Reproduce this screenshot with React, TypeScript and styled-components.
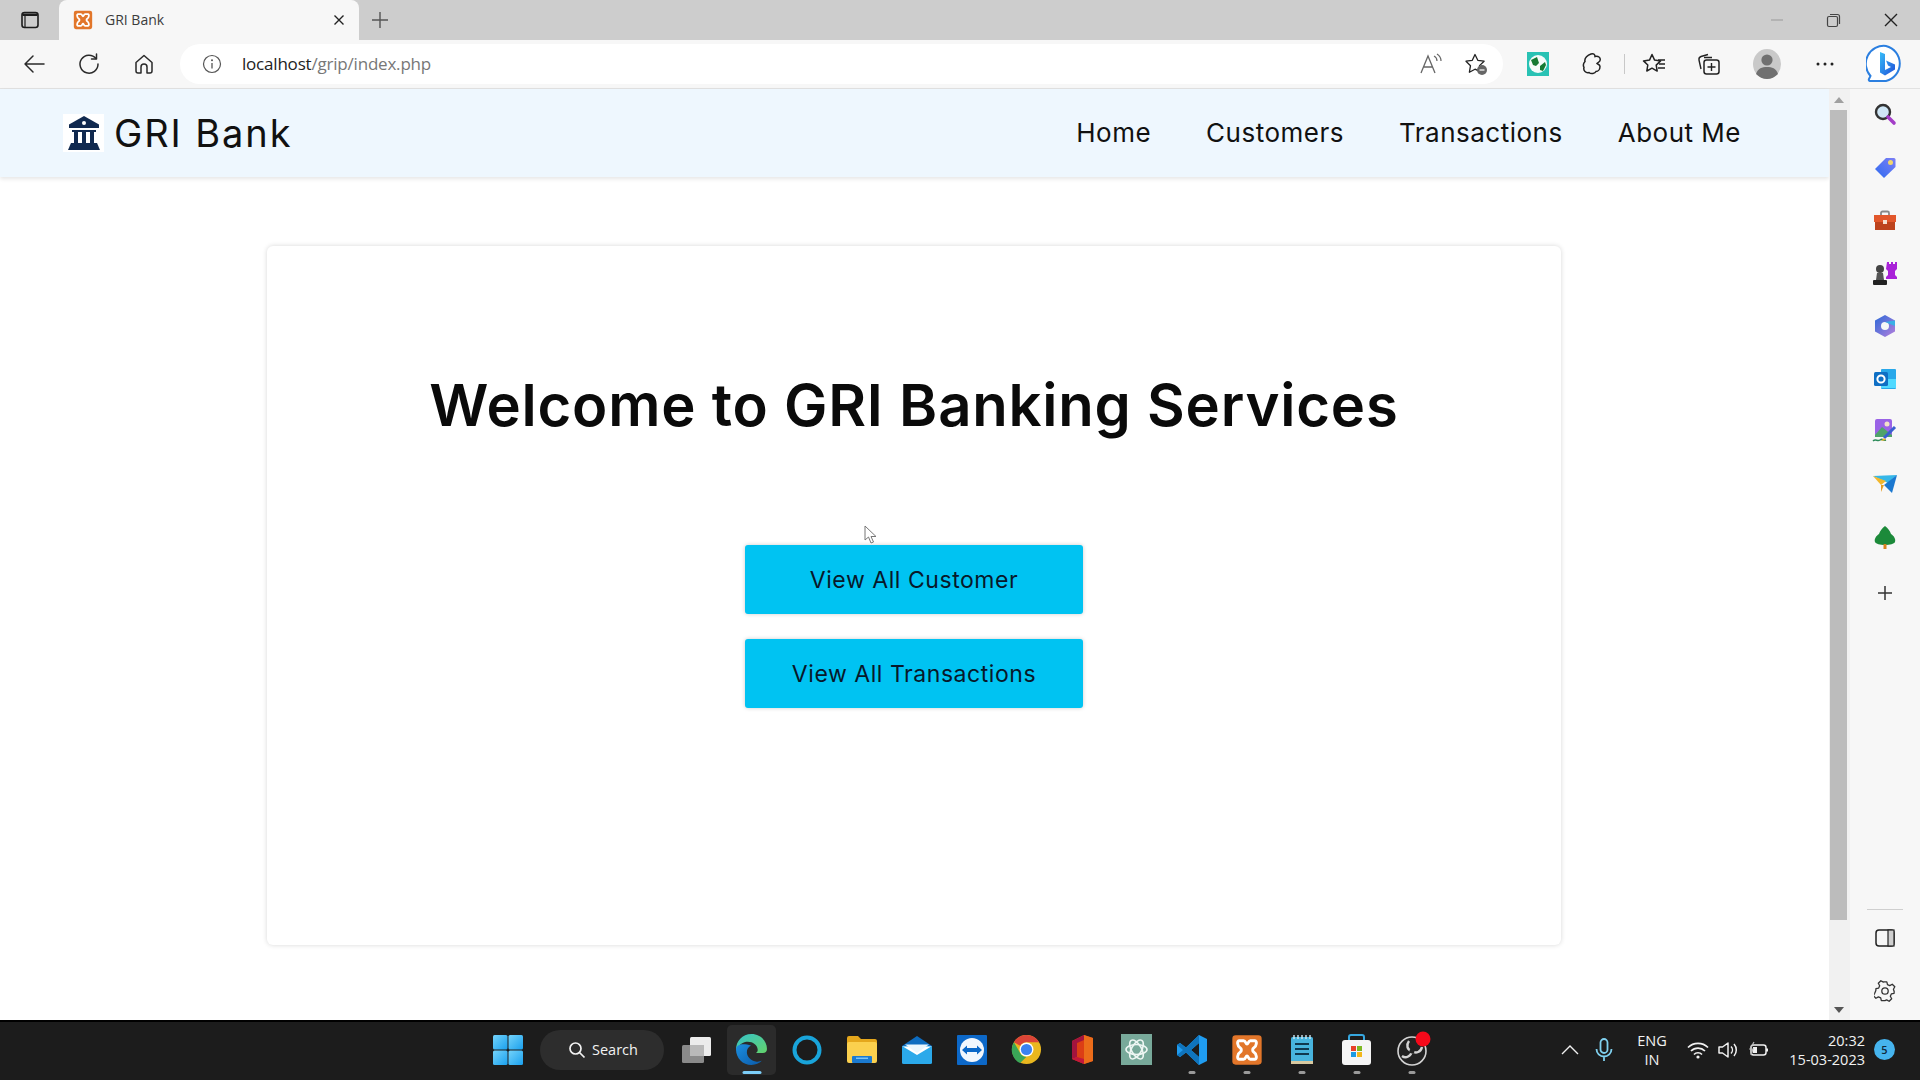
import React from "react";
import styled, { createGlobalStyle } from "styled-components";

const Global = createGlobalStyle`
  html, body { margin: 0; padding: 0; height: 100%; overflow: hidden; background: #fff; }
  #root { height: 100%; }
  * { box-sizing: border-box; }
`;

const Screen = styled.div`
  position: relative;
  width: 1920px;
  height: 1080px;
  display: flex;
  flex-direction: column;
  font-family: "Inter", "Liberation Sans", sans-serif;
  color: #0b0b0b;
  overflow: hidden;
`;

/* ---------- browser chrome ---------- */
const TabStrip = styled.div`
  height: 40px;
  flex: none;
  background: #cdcdcd;
  display: flex;
  align-items: flex-end;
`;
const TabActions = styled.div`
  width: 59px;
  height: 40px;
  display: flex;
  align-items: center;
  padding-left: 20px;
`;
const Tab = styled.div`
  width: 300px;
  height: 40px;
  background: #f7f7f7;
  border-radius: 8px 8px 0 0;
  display: flex;
  align-items: center;
  padding: 0 13px 0 14px;
  gap: 12px;
`;
const TabTitle = styled.span`
  flex: 1;
  font: 14px "Open Sans", sans-serif;
  color: #3c3c3c;
  margin-top: -1px;
`;
const NewTab = styled.div`
  width: 42px;
  height: 40px;
  display: flex;
  align-items: center;
  justify-content: center;
  margin-top: -1px;
`;
const WindowControls = styled.div`
  margin-left: auto;
  height: 40px;
  display: flex;
  align-items: center;
  padding-right: 1px;
`;
const WinBtn = styled.div`
  width: 57px;
  display: flex;
  justify-content: center;
`;
const Toolbar = styled.div`
  height: 49px;
  flex: none;
  background: #f7f7f7;
  border-bottom: 1px solid #e2e2e2;
  display: flex;
  align-items: center;
  padding-left: 6px;
`;
const ToolBtn = styled.div<{ $w?: number }>`
  width: ${(p) => p.$w ?? 55}px;
  height: 40px;
  flex: none;
  display: flex;
  align-items: center;
  justify-content: center;
`;
const AddressBar = styled.div`
  width: 1323px;
  height: 40px;
  margin: 0 7px 0 9px;
  background: #fff;
  border-radius: 20px;
  display: flex;
  align-items: center;
  padding: 0 5px 0 22px;
  flex: none;
`;
const Url = styled.span`
  flex: 1;
  margin: -2px 0 0 20px;
  font: 17px "Open Sans", sans-serif;
  letter-spacing: -0.2px;
  color: #777;
`;
const UrlHost = styled.span`
  color: #222;
`;
const ToolDivider = styled.div`
  width: 1px;
  height: 20px;
  background: #c8c8c8;
  flex: none;
  margin: 0 1px 0 4px;
`;

/* ---------- viewport ---------- */
const Viewport = styled.div`
  flex: 1;
  min-height: 0;
  display: flex;
`;
const Page = styled.div`
  flex: 1;
  min-width: 0;
  background: #fff;
  display: flex;
  flex-direction: column;
`;
const NavBar = styled.nav`
  height: 88px;
  flex: none;
  background: #eef7fe;
  box-shadow: 0 2px 4px rgba(0, 0, 0, 0.1);
  display: flex;
  align-items: center;
  padding: 0 88px 0 63px;
`;
const Brand = styled.div`
  display: flex;
  align-items: center;
  gap: 10px;
  font-size: 38px;
  line-height: 46px;
  letter-spacing: 1.9px;
  font-weight: 400;
  color: #111;
  margin-top: -1px;
`;
const BrandMark = styled.div`
  width: 41px;
  height: 38px;
  background: #fff;
  display: flex;
  align-items: center;
  justify-content: center;
`;
const NavLinks = styled.div`
  margin: -2px 0 0 auto;
  display: flex;
  gap: 55px;
`;
const NavLink = styled.a`
  font-size: 26px;
  letter-spacing: 0.5px;
  color: #111;
`;
const Content = styled.main`
  flex: 1;
  padding: 69px 0 0 267px;
`;
const Card = styled.section`
  width: 1294px;
  height: 699px;
  background: #fff;
  border-radius: 6px;
  box-shadow: 0 0 5px rgba(0, 0, 0, 0.16);
  display: flex;
  flex-direction: column;
  align-items: center;
  padding-top: 121px;
`;
const Heading = styled.h1`
  margin: 0;
  font-size: 58px;
  line-height: 76px;
  font-weight: 600;
  letter-spacing: 0.8px;
  color: #0a0a0a;
`;
const ButtonStack = styled.div`
  margin-top: 102px;
  display: flex;
  flex-direction: column;
  gap: 25px;
`;
const ActionButton = styled.button`
  width: 338px;
  height: 69px;
  border: 0;
  border-radius: 3px;
  background: #00c3f2;
  box-shadow: 0 0 4px rgba(0, 0, 0, 0.2);
  font-family: inherit;
  font-size: 23px;
  letter-spacing: 0.55px;
  color: #08182a;
`;
const Cursor = styled.svg`
  position: absolute;
  left: 864px;
  top: 525px;
`;
const ScrollTrack = styled.div`
  width: 21px;
  flex: none;
  background: #f1f1f1;
  display: flex;
  flex-direction: column;
  align-items: center;
  padding-right: 2px;
`;
const ArrowBox = styled.div`
  height: 21px;
  display: flex;
  align-items: center;
  justify-content: center;
  flex: none;
`;
const ScrollThumb = styled.div`
  width: 17px;
  height: 810px;
  background: #bcbcbc;
  flex: none;
`;
const Spring = styled.div`
  flex: 1;
`;
const SideBar = styled.aside`
  width: 70px;
  flex: none;
  background: #f7f7f7;
  display: flex;
  flex-direction: column;
  align-items: center;
  padding-bottom: 3px;
`;
const SideBtn = styled.div<{ $top?: number }>`
  height: 52.7px;
  width: 100%;
  flex: none;
  margin-top: ${(p) => p.$top ?? 0}px;
  display: flex;
  align-items: center;
  justify-content: center;
`;
const SideDivider = styled.div`
  width: 36px;
  height: 1px;
  background: #cfcfcf;
  margin-bottom: 2px;
`;

/* ---------- task bar ---------- */
const TaskBar = styled.footer`
  height: 60px;
  flex: none;
  background: #1c1c1c;
  border-top: 2px solid #000;
  display: flex;
  align-items: center;
  padding: 0 0 3px 480px;
  position: relative;
`;
const TaskCell = styled.div<{ $active?: boolean; $gap?: number }>`
  position: relative;
  width: 55px;
  height: 50px;
  flex: none;
  margin-left: ${(p) => p.$gap ?? 0}px;
  display: flex;
  align-items: center;
  justify-content: center;
  &::before {
    content: "";
    position: absolute;
    left: 3px;
    right: 3px;
    top: 0;
    bottom: 0;
    border-radius: 5px;
    background: ${(p) => (p.$active ? "#2b2b2b" : "transparent")};
  }
  & > svg {
    position: relative;
  }
`;
const RunDot = styled.span<{ $active?: boolean }>`
  position: absolute;
  left: 50%;
  transform: translateX(-50%);
  bottom: 1px;
  width: ${(p) => (p.$active ? 19 : 7)}px;
  height: 3px;
  border-radius: 2px;
  background: ${(p) => (p.$active ? "#7ccdf7" : "#9a9a9a")};
`;
const SearchPill = styled.div`
  width: 124px;
  height: 40px;
  margin-left: 5px;
  border-radius: 20px;
  background: #2d2d2d;
  display: flex;
  align-items: center;
  justify-content: center;
  gap: 6px;
  flex: none;
  font: 14.5px "Open Sans", sans-serif;
  color: #f2f2f2;
  padding-left: 2px;
`;
const Tray = styled.div`
  margin-left: auto;
  display: flex;
  align-items: center;
  height: 100%;
  padding-right: 25px;
`;
const TrayIcon = styled.div<{ $w: number }>`
  width: ${(p) => p.$w}px;
  display: flex;
  justify-content: center;
  flex: none;
`;
const TrayText = styled.div<{ $align: string; $w: number }>`
  width: ${(p) => p.$w}px;
  flex: none;
  font: 14.5px/19px "Open Sans", sans-serif;
  color: #f2f2f2;
  text-align: ${(p) => p.$align};
`;
const Badge = styled.div`
  width: 21px;
  height: 21px;
  margin-left: 9px;
  border-radius: 50%;
  background: #46b4ee;
  color: #10283a;
  font: 600 11px/21px "Open Sans", sans-serif;
  text-align: center;
  flex: none;
`;

/* ---------- drawings ---------- */
type IP = { s?: number };
const line = { fill: "none", stroke: "#2a2a2a", strokeWidth: 1.5, strokeLinecap: "round" as const, strokeLinejoin: "round" as const };

const Xampp = ({ s = 20 }: IP) => (
  <svg width={s} height={s} viewBox="0 0 24 24">
    <rect x="1" y="1" width="22" height="22" rx="2.5" fill="#e2762a" />
    <path d="M6 5h3.500c1.500 0 1.500 2.500 2.500 2.500S13 5 14.500 5H18c1.500 0 1.500 4-1 5.500-1 .6-1 2.400 0 3 2.500 1.500 2.500 5.500 1 5.500h-3.500c-1.500 0-1.500-2.500-2.500-2.500S11 19 9.500 19H6c-1.500 0-1.500-4 1-5.500 1-.6 1-2.400 0-3C4.500 9 4.500 5 6 5z" fill="none" stroke="#fff" strokeWidth="2.200" />
  </svg>
);
const BankMark = () => (
  <svg width="34" height="36" viewBox="0 0 34 36">
    <path d="M17 1 L32 9.500 V13 H2 V9.500 Z" fill="#10294f" />
    <circle cx="17" cy="8" r="2" fill="#fff" />
    <rect x="5" y="15" width="24" height="2" fill="#10294f" />
    <rect x="7" y="17" width="4" height="11" fill="#10294f" />
    <rect x="15" y="17" width="4" height="11" fill="#10294f" />
    <rect x="23" y="17" width="4" height="11" fill="#10294f" />
    <path d="M4 28 H30 L33 35 H1 Z" fill="#10294f" />
  </svg>
);
const Edge = () => (
  <svg width="33" height="33" viewBox="0 0 32 32">
    <defs>
      <linearGradient id="eg1" x1="0" y1="0" x2="1" y2="1"><stop offset="0" stopColor="#36c2c9" /><stop offset="1" stopColor="#63d36a" /></linearGradient>
      <linearGradient id="eg2" x1="0" y1="0" x2="1" y2="1"><stop offset="0" stopColor="#1c8fe0" /><stop offset="1" stopColor="#0b5aa8" /></linearGradient>
    </defs>
    <path d="M16 1C7 1 1 8 1 16c0 .5 0 1 .1 1.500C3 11 8 8.500 12.500 8.500c5 0 9 3 9.500 7.500.2 2-1 3.500-3 3.500h8c2.500 0 4-1.500 4-4C31 7.500 24.500 1 16 1z" fill="url(#eg1)" />
    <path d="M1 16c0 8.500 6.500 15 15 15 4 0 7.500-1.500 10-4-2 .8-4 1-6 .6-5-1-8.500-5-8.500-9 0-3 1.500-5 4-6.500C9 10 1 10 1 16z" fill="url(#eg2)" />
  </svg>
);
const Chrome = () => (
  <svg width="31" height="31" viewBox="0 0 32 32">
    <circle cx="16" cy="16" r="15" fill="#e9b71f" />
    <path d="M16 1a15 15 0 0 1 13 7.500H16a7.500 7.500 0 0 0-6.500 3.750L3 8.500A15 15 0 0 1 16 1z" fill="#db4437" />
    <path d="M3 8.500l6.500 11.250a7.500 7.500 0 0 0 6.500 3.750L9.500 30A15 15 0 0 1 3 8.500z" fill="#3aa757" />
    <circle cx="16" cy="16" r="7.200" fill="#fff" />
    <circle cx="16" cy="16" r="5.800" fill="#3b82f0" />
  </svg>
);
const Teamviewer = () => (
  <svg width="30" height="30" viewBox="0 0 30 30">
    <rect width="30" height="30" rx="1" fill="#0c68c8" />
    <circle cx="15" cy="15" r="12" fill="#f2f7fd" />
    <path d="M5 15l5-4.500V13h10v-2.500l5 4.500-5 4.500V17H10v2.500z" fill="#0c68c8" />
  </svg>
);
const ChatGpt = () => (
  <svg width="31" height="31" viewBox="0 0 31 31">
    <rect width="31" height="31" fill="#78a99a" />
    <g fill="none" stroke="#eef6f3" strokeWidth="1.600">
      <ellipse cx="15.500" cy="15.500" rx="10.500" ry="5" />
      <ellipse cx="15.500" cy="15.500" rx="10.500" ry="5" transform="rotate(60 15.500 15.500)" />
      <ellipse cx="15.500" cy="15.500" rx="10.500" ry="5" transform="rotate(120 15.500 15.500)" />
    </g>
  </svg>
);

const taskApps: { key: string; node: React.ReactNode; dot?: boolean; active?: boolean }[] = [
  { key: "tv", node: (
    <svg width="31" height="28" viewBox="0 0 31 28">
      <rect x="1" y="9" width="22" height="18" rx="1.500" fill="#8a8a8a" />
      <rect x="9" y="1" width="21" height="19" rx="1.500" fill="#ececec" />
      <rect x="9" y="9" width="14" height="11" fill="#b9b9b9" />
    </svg>
  ) },
  { key: "edge", node: <Edge />, active: true },
  { key: "cortana", node: (
    <svg width="30" height="30" viewBox="0 0 30 30"><circle cx="15" cy="15" r="12.500" fill="none" stroke="#19a4da" strokeWidth="4" /></svg>
  ) },
  { key: "files", node: (
    <svg width="32" height="29" viewBox="0 0 32 29">
      <path d="M1 3a2 2 0 0 1 2-2h9l3 3h14a2 2 0 0 1 2 2v4H1z" fill="#e5a71c" />
      <rect x="1" y="7" width="30" height="21" rx="2" fill="#fbd04e" />
      <rect x="6" y="21" width="20" height="7" rx="1" fill="#1b7ad0" />
      <rect x="10" y="22.500" width="12" height="1.500" fill="#7cc4f5" />
    </svg>
  ) },
  { key: "mail", node: (
    <svg width="32" height="30" viewBox="0 0 32 30">
      <path d="M1 11 L16 1 L31 11 V14 H1z" fill="#0d6cc0" />
      <rect x="1" y="11" width="30" height="18" rx="1.500" fill="#2ba9ea" />
      <path d="M1 11 L16 20 L31 11 V11.500 H1z" fill="#fff" />
      <path d="M4 9.500h24L16 18z" fill="#eaf6fd" />
    </svg>
  ) },
  { key: "team", node: <Teamviewer /> },
  { key: "chrome", node: <Chrome /> },
  { key: "office", node: (
    <svg width="24" height="31" viewBox="0 0 24 31">
      <path d="M14 1 L23 4 V27 L14 30 L2 25 V7z" fill="#dc3e15" />
      <path d="M14 1 L2 7 V25 L7 23 V9 L14 6z" fill="#a3143e" />
      <path d="M14 1 L23 4 V27 L14 30z" fill="#eb6c1a" />
      <path d="M2 25 L14 30 V25 L7 23z" fill="#c3173c" />
    </svg>
  ) },
  { key: "gpt", node: <ChatGpt /> },
  { key: "code", dot: true, node: (
    <svg width="32" height="32" viewBox="0 0 32 32">
      <path d="M23 1 L31 5 V27 L23 31 L10 18.500 L4 23 L1 21 V11 L4 9 L10 13.500z M23 9 L15 16 L23 23z" fillRule="evenodd" fill="#1f9cf0" />
      <path d="M23 1 L10 13.500 L4 9 L1 11 L7 16 L1 21 L4 23 L10 18.500 L23 31z M23 9 L15 16 L23 23z" fillRule="evenodd" fill="#0f74bd" />
    </svg>
  ) },
  { key: "xampp", dot: true, node: <Xampp s={32} /> },
  { key: "notes", dot: true, node: (
    <svg width="24" height="31" viewBox="0 0 24 31">
      <rect x="1" y="3" width="22" height="27" rx="1.500" fill="#48b4de" />
      <rect x="1" y="27" width="22" height="3" fill="#d8c9a0" />
      <path d="M4 1v4M8 1v4M12 1v4M16 1v4M20 1v4" stroke="#cfe8f4" strokeWidth="1.400" />
      <path d="M5 10h14M5 15h14M5 20h14" stroke="#10384f" strokeWidth="2" />
    </svg>
  ) },
  { key: "store", dot: true, node: (
    <svg width="31" height="32" viewBox="0 0 31 32">
      <path d="M8 7V3a2 2 0 0 1 2-2h11a2 2 0 0 1 2 2v4" fill="none" stroke="#36a7df" strokeWidth="2" />
      <rect x="1" y="6" width="29" height="25" rx="3" fill="#f5f5f5" />
      <rect x="10" y="12" width="5" height="5" fill="#e8412a" />
      <rect x="16" y="12" width="5" height="5" fill="#7db824" />
      <rect x="10" y="18" width="5" height="5" fill="#1d9ae2" />
      <rect x="16" y="18" width="5" height="5" fill="#f3b71b" />
    </svg>
  ) },
  { key: "obs", dot: true, node: (
    <svg width="40" height="40" viewBox="0 0 40 40">
      <circle cx="20" cy="21" r="14" fill="#222" stroke="#d4d4d4" strokeWidth="1.600" />
      <path d="M20 21c-5-1-6-6-3-10M20 21c4 3 9 1 10-4M20 21c-1 5-6 8-10 5" fill="none" stroke="#d4d4d4" strokeWidth="2.400" />
      <circle cx="20" cy="21" r="2.500" fill="#222" />
      <circle cx="31" cy="9" r="7.500" fill="#f5091a" />
    </svg>
  ) },
];

const sideIcons: React.ReactNode[] = [
  <svg key="a" width="24" height="24" viewBox="0 0 24 24">
    <circle cx="10" cy="9" r="7" fill="#cfe6f6" stroke="#333" strokeWidth="2.400" />
    <path d="M15 14 L21 20" stroke="#a33dc7" strokeWidth="3.600" strokeLinecap="round" />
  </svg>,
  <svg key="b" width="24" height="24" viewBox="0 0 24 24">
    <defs><linearGradient id="tag" x1="0" y1="1" x2="1" y2="0"><stop offset="0" stopColor="#2d6bf0" /><stop offset="1" stopColor="#7d7ff5" /></linearGradient></defs>
    <path d="M13 2 H21 a1.500 1.500 0 0 1 1.500 1.500 V11 L11 22 L2 13z" fill="url(#tag)" />
    <circle cx="17.500" cy="6.500" r="2.500" fill="#f2d66c" />
  </svg>,
  <svg key="c" width="24" height="22" viewBox="0 0 24 22">
    <path d="M8 6V3a1.500 1.500 0 0 1 1.500-1.500h5A1.500 1.500 0 0 1 16 3v3" fill="none" stroke="#888" strokeWidth="1.800" />
    <rect x="1" y="5" width="22" height="7" fill="#e2572b" />
    <rect x="2" y="12" width="20" height="8" fill="#bd431d" />
    <rect x="10" y="10" width="4" height="4" fill="#f5e0d0" />
  </svg>,
  <svg key="d" width="26" height="26" viewBox="0 0 26 26">
    <path d="M15 2h2v2h2V2h2v2h2V2h2v7l-2 2v4l2 2v2H14v-2l2-2v-4l-2-2z" fill="#a922d8" />
    <circle cx="8" cy="9" r="4" fill="#444" />
    <path d="M5 13h6l1 7H4z" fill="#555" />
    <rect x="1" y="20" width="14" height="5" rx="1" fill="#222" />
  </svg>,
  <svg key="e" width="24" height="24" viewBox="0 0 24 24">
    <defs><linearGradient id="m3" x1="0" y1="0" x2="1" y2="1"><stop offset="0" stopColor="#2b6ad8" /><stop offset="1" stopColor="#b57fdc" /></linearGradient></defs>
    <path d="M12 1 L22 6.500 V17.500 L12 23 L2 17.500 V6.500z" fill="url(#m3)" />
    <circle cx="12" cy="12" r="4" fill="#f7f7f7" />
    <path d="M12 8 L22 6.500 V12z" fill="#3ab0e6" />
  </svg>,
  <svg key="f" width="24" height="24" viewBox="0 0 24 24">
    <rect x="8" y="2" width="15" height="20" rx="1" fill="#28a8ea" />
    <path d="M8 12 L23 12 V21 H8z" fill="#50d9ff" />
    <rect x="1" y="5" width="14" height="14" rx="1.500" fill="#0f6fc4" />
    <circle cx="8" cy="12" r="3.600" fill="none" stroke="#fff" strokeWidth="2" />
  </svg>,
  <svg key="g" width="26" height="26" viewBox="0 0 26 26">
    <rect x="3" y="1" width="17" height="18" rx="2" fill="#9a63e6" />
    <path d="M3 17 L10 9 L20 17 V19 H3z" fill="#4fa36a" />
    <circle cx="15" cy="6" r="2.500" fill="#f4e1c9" />
    <path d="M12 20 L23 9" stroke="#3a5fd0" strokeWidth="3" />
    <path d="M1 23c3-3 4 1 7-1s3 1 6 0" fill="none" stroke="#2d8c5a" strokeWidth="1.500" />
    <path d="M9 23l3-3 2 2z" fill="#f0b429" />
  </svg>,
  <svg key="h" width="26" height="20" viewBox="0 0 26 20">
    <path d="M1 2 L25 1 L16 9z" fill="#36b7e8" />
    <path d="M1 2 L14 7 L9 11z" fill="#f2b72c" />
    <path d="M25 1 L20 19 L12 11z" fill="#1b78d0" />
    <path d="M9 11 L12 11 L9 18z" fill="#e89c20" />
  </svg>,
  <svg key="i" width="22" height="24" viewBox="0 0 22 24">
    <path d="M11 1 C14 3 16 6 17 9 C20 11 22 14 21 17 C20 19 16 20 11 20 C6 20 2 19 1 17 C0 14 2 11 5 9 C6 6 8 3 11 1z" fill="#1c8a3a" />
    <rect x="9.500" y="19" width="3" height="5" fill="#d9831f" />
  </svg>,
  <svg key="j" width="18" height="18" viewBox="0 0 18 18"><path d="M9 2v14M2 9h14" stroke="#333" strokeWidth="1.500" /></svg>,
];

export default function App() {
  return (
    <Screen>
      <Global />
      <TabStrip>
        <TabActions>
          <svg width="20" height="20" viewBox="0 0 20 20">
            <rect x="2" y="2.500" width="16" height="15" rx="2.500" fill="none" stroke="#1c1c1c" strokeWidth="1.600" />
            <path d="M2.500 3.500h15V6h-15z" fill="#1c1c1c" />
            <path d="M5 6v11" stroke="#1c1c1c" strokeWidth="1.200" />
          </svg>
        </TabActions>
        <Tab>
          <Xampp s={20} />
          <TabTitle>GRI Bank</TabTitle>
          <svg width="14" height="14" viewBox="0 0 14 14"><path d="M2.500 2.500l9 9M11.500 2.500l-9 9" stroke="#222" strokeWidth="1.400" /></svg>
        </Tab>
        <NewTab>
          <svg width="20" height="20" viewBox="0 0 20 20"><path d="M10 2v16M2 10h16" stroke="#555" strokeWidth="1.400" /></svg>
        </NewTab>
        <WindowControls>
          <WinBtn><svg width="14" height="14" viewBox="0 0 14 14"><path d="M1 7h12" stroke="#aaa" strokeWidth="1.500" /></svg></WinBtn>
          <WinBtn><svg width="15" height="15" viewBox="0 0 15 15"><rect x="1.500" y="3.500" width="10" height="10" rx="1.500" fill="none" stroke="#444" strokeWidth="1.200" /><path d="M4 1.500h7.500a2 2 0 0 1 2 2V11" fill="none" stroke="#444" strokeWidth="1.200" /></svg></WinBtn>
          <WinBtn><svg width="16" height="16" viewBox="0 0 16 16"><path d="M2 2l12 12M14 2L2 14" stroke="#222" strokeWidth="1.400" /></svg></WinBtn>
        </WindowControls>
      </TabStrip>

      <Toolbar>
        <ToolBtn>
          <svg width="24" height="24" viewBox="0 0 24 24"><path d="M22 12H3M11 4l-8 8 8 8" {...line} /></svg>
        </ToolBtn>
        <ToolBtn>
          <svg width="24" height="24" viewBox="0 0 24 24"><path d="M19 6.500A9 9 0 1 0 21 12" {...line} /><path d="M19.500 2v5h-5" {...line} /></svg>
        </ToolBtn>
        <ToolBtn>
          <svg width="22" height="22" viewBox="0 0 22 22"><path d="M8 20H5a2 2 0 0 1-2-2V9.500L11 2.500l8 7V18a2 2 0 0 1-2 2h-3v-6a3 3 0 0 0-6 0z" {...line} /></svg>
        </ToolBtn>
        <AddressBar>
          <svg width="20" height="20" viewBox="0 0 20 20"><circle cx="10" cy="10" r="8.500" fill="none" stroke="#555" strokeWidth="1.200" /><path d="M10 9v5.500" stroke="#555" strokeWidth="1.300" /><circle cx="10" cy="6.200" r="1" fill="#555" /></svg>
          <Url><UrlHost>localhost</UrlHost>/grip/index.php</Url>
          <ToolBtn $w={45}>
            <svg width="24" height="22" viewBox="0 0 24 22">
              <path d="M2 20L9 3l7 17M4.500 14h9" fill="none" stroke="#666" strokeWidth="1.300" />
              <path d="M15 3c2 1 3 3 3 5M18 1c2.500 1.500 4 4 4 7" fill="none" stroke="#666" strokeWidth="1.200" />
            </svg>
          </ToolBtn>
          <ToolBtn $w={45}>
            <svg width="24" height="24" viewBox="0 0 24 24">
              <path d="M11 2.500l2.800 5.800 6.300.9-4.600 4.400 1.100 6.300L11 17.200l-5.600 3 1.100-6.500L2 9.200l6.300-.9z" fill="none" stroke="#222" strokeWidth="1.300" strokeLinejoin="round" />
              <circle cx="18" cy="18" r="5" fill="#666" />
              <path d="M15.500 18h5" stroke="#fff" strokeWidth="1.200" />
            </svg>
          </ToolBtn>
        </AddressBar>
        <ToolBtn>
          <svg width="22" height="24" viewBox="0 0 22 24">
            <rect width="22" height="24" fill="#29c2b4" />
            <circle cx="11" cy="12" r="9" fill="#f5fbfa" />
            <path d="M4 8l6-3 2 6-3 3-3-1zM13 14l5-4 1 3-3 6-3-1z" fill="#167a33" />
          </svg>
        </ToolBtn>
        <ToolBtn>
          <svg width="22" height="24" viewBox="0 0 22 24">
            <path d="M9 2c3-1 4 1 4 2.500 3-1 6 1 5 4 0 1-2 2-3 3 1 1 3 1 3 3 0 3-2 5-4 5-1 2-5 3-7 1-3 1-6-2-5-5-1-2-1-4 1-6C2 6 6 3 9 2z" fill="none" stroke="#222" strokeWidth="1.500" />
          </svg>
        </ToolBtn>
        <ToolDivider />
        <ToolBtn>
          <svg width="24" height="24" viewBox="0 0 24 24">
            <path d="M10 2.500l2.600 5.600 6 .8-4.400 4.200 1 6-5.200-2.900L4.800 19l1-6L1.500 8.900l6-.8z" fill="none" stroke="#222" strokeWidth="1.500" strokeLinejoin="round" />
            <path d="M16 8h7M17 12h6M16 16h7" stroke="#222" strokeWidth="1.400" />
          </svg>
        </ToolBtn>
        <ToolBtn>
          <svg width="24" height="24" viewBox="0 0 24 24">
            <path d="M4 17L2 8c-.3-2 .5-3 2-3.500L11 2.500" fill="none" stroke="#222" strokeWidth="1.400" />
            <rect x="7" y="8" width="15" height="14" rx="2.500" fill="none" stroke="#222" strokeWidth="1.500" />
            <path d="M7 5.500h8M14.500 11v8M10.500 15h8" fill="none" stroke="#222" strokeWidth="1.400" />
          </svg>
        </ToolBtn>
        <ToolBtn $w={61}>
          <svg width="28" height="30" viewBox="0 0 28 30">
            <ellipse cx="14" cy="15" rx="14" ry="15" fill="#c9c9c9" />
            <circle cx="14" cy="11" r="5.600" fill="#707070" />
            <path d="M3 25c2-6 6-7 11-7s9 1 11 7c-3 3-7 5-11 5s-8-2-11-5z" fill="#707070" />
          </svg>
        </ToolBtn>
        <ToolBtn $w={55}>
          <svg width="20" height="6" viewBox="0 0 20 6"><circle cx="3" cy="3" r="1.500" fill="#222" /><circle cx="10" cy="3" r="1.500" fill="#222" /><circle cx="17" cy="3" r="1.500" fill="#222" /></svg>
        </ToolBtn>
        <ToolBtn $w={68}>
          <svg width="40" height="40" viewBox="0 0 40 40">
            <defs><linearGradient id="bing" x1="0" y1="0" x2="1" y2="1"><stop offset="0" stopColor="#37bdf8" /><stop offset="1" stopColor="#1f4fd8" /></linearGradient></defs>
            <path d="M20 2a18 18 0 0 1 0 35H4c-1 0-1.500-1-1-2l1.500-3A18 18 0 0 1 20 2z" fill="#fff" stroke="#2b7fe0" strokeWidth="2" />
            <path d="M14 8l5 2v16l6-3-3-1.500-2-5 9 4v5l-10 6-5-3z" fill="url(#bing)" />
          </svg>
        </ToolBtn>
      </Toolbar>

      <Viewport>
        <Page>
          <NavBar>
            <Brand>
              <BrandMark><BankMark /></BrandMark>
              GRI Bank
            </Brand>
            <NavLinks>
              <NavLink>Home</NavLink>
              <NavLink>Customers</NavLink>
              <NavLink>Transactions</NavLink>
              <NavLink>About Me</NavLink>
            </NavLinks>
          </NavBar>
          <Content>
            <Card>
              <Heading>Welcome to GRI Banking Services</Heading>
              <ButtonStack>
                <ActionButton>View All Customer</ActionButton>
                <ActionButton>View All Transactions</ActionButton>
              </ButtonStack>
            </Card>
          </Content>
        </Page>
        <ScrollTrack>
          <ArrowBox><svg width="10" height="6" viewBox="0 0 10 6"><path d="M5 0l5 6H0z" fill="#a0a0a0" /></svg></ArrowBox>
          <ScrollThumb />
          <Spring />
          <ArrowBox><svg width="10" height="6" viewBox="0 0 10 6"><path d="M5 6L0 0h10z" fill="#555" /></svg></ArrowBox>
        </ScrollTrack>
        <SideBar>
          {sideIcons.map((ic, i) => (
            <SideBtn key={i} $top={i === 9 ? 3 : 0}>{ic}</SideBtn>
          ))}
          <Spring />
          <SideDivider />
          <SideBtn>
            <svg width="20" height="18" viewBox="0 0 20 18"><rect x="1" y="1" width="18" height="16" rx="3" fill="none" stroke="#222" strokeWidth="1.500" /><rect x="13" y="1" width="6" height="16" fill="#cfcfcf" stroke="#222" strokeWidth="1.200" /></svg>
          </SideBtn>
          <SideBtn>
            <svg width="22" height="22" viewBox="0 0 24 24"><path d="M10 2h4l.7 3 2.500 1.100 2.700-1.500 2.800 2.800-1.500 2.700L22 12.500l-.1 2-3 .7-1.100 2.500 1.500 2.700-2.800 2.800-2.700-1.500-1.800.8h-4l-.7-3-2.500-1.100-2.700 1.500-2.800-2.800 1.500-2.700L2 11.500l.1-2 3-.7 1.100-2.500-1.500-2.700 2.800-2.800 2.700 1.500z" fill="none" stroke="#333" strokeWidth="1.400" strokeLinejoin="round" /><circle cx="12" cy="12" r="3.500" fill="none" stroke="#333" strokeWidth="1.400" /></svg>
          </SideBtn>
        </SideBar>
      </Viewport>

      <TaskBar>
        <TaskCell>
          <svg width="32" height="32" viewBox="0 0 32 32">
            <defs><linearGradient id="win" x1="0" y1="0" x2="1" y2="1"><stop offset="0" stopColor="#74d3fa" /><stop offset="1" stopColor="#1aa0ee" /></linearGradient></defs>
            <rect x="1" y="1" width="14.500" height="14.500" rx="1.500" fill="url(#win)" />
            <rect x="16.500" y="1" width="14.500" height="14.500" rx="1.500" fill="url(#win)" />
            <rect x="1" y="16.500" width="14.500" height="14.500" rx="1.500" fill="url(#win)" />
            <rect x="16.500" y="16.500" width="14.500" height="14.500" rx="1.500" fill="url(#win)" />
          </svg>
        </TaskCell>
        <SearchPill>
          <svg width="18" height="18" viewBox="0 0 18 18"><circle cx="7.500" cy="7.500" r="5.500" fill="none" stroke="#f2f2f2" strokeWidth="1.700" /><path d="M11.500 11.500l5 5" stroke="#f2f2f2" strokeWidth="1.700" /></svg>
          Search
        </SearchPill>
        {taskApps.map((a, i) => (
          <TaskCell key={a.key} $active={a.active} $gap={i === 0 ? 5 : 0}>
            {a.node}
            {(a.dot || a.active) && <RunDot $active={a.active} />}
          </TaskCell>
        ))}
        <Tray>
          <TrayIcon $w={30}><svg width="20" height="12" viewBox="0 0 20 12"><path d="M2 10l8-8 8 8" fill="none" stroke="#f0f0f0" strokeWidth="1.400" /></svg></TrayIcon>
          <TrayIcon $w={38}><svg width="18" height="24" viewBox="0 0 18 24"><rect x="5.500" y="1" width="7" height="14" rx="3.500" fill="none" stroke="#7fd0ee" strokeWidth="1.800" /><path d="M1.500 11a7.500 7.500 0 0 0 15 0M9 18.500V23" fill="none" stroke="#7fd0ee" strokeWidth="1.800" /></svg></TrayIcon>
          <TrayText $align="center" $w={58}>ENG<br />IN</TrayText>
          <TrayIcon $w={33}><svg width="22" height="18" viewBox="0 0 22 18"><path d="M1 6.500a14 14 0 0 1 20 0M4 10a10 10 0 0 1 14 0M7 13.500a5.500 5.500 0 0 1 8 0" fill="none" stroke="#f0f0f0" strokeWidth="1.700" /><circle cx="11" cy="16" r="1.600" fill="#f0f0f0" /></svg></TrayIcon>
          <TrayIcon $w={30}><svg width="22" height="18" viewBox="0 0 22 18"><path d="M1 6h3.500L10 2v14l-5.500-4H1z" fill="none" stroke="#f0f0f0" strokeWidth="1.500" strokeLinejoin="round" /><path d="M13 5.500a5 5 0 0 1 0 7M16 3a9 9 0 0 1 0 12" fill="none" stroke="#f0f0f0" strokeWidth="1.500" /></svg></TrayIcon>
          <TrayIcon $w={30}><svg width="22" height="18" viewBox="0 0 22 18"><rect x="3" y="4" width="15" height="10" rx="2.500" fill="none" stroke="#f0f0f0" strokeWidth="1.500" /><rect x="5" y="6" width="4" height="6" fill="#f0f0f0" /><path d="M19 7.500v3" stroke="#f0f0f0" strokeWidth="2" /><path d="M6 1L2 8h3l-2 6" fill="none" stroke="#bbb" strokeWidth="1.200" /></svg></TrayIcon>
          <TrayText $align="right" $w={91}>20:32<br />15-03-2023</TrayText>
          <Badge>5</Badge>
        </Tray>
      </TaskBar>

      <Cursor width="14" height="20" viewBox="0 0 14 20">
        <path d="M1 1v14l3.500-3 2.500 6 2.500-1-2.500-5.500H12z" fill="#fff" stroke="#777" strokeWidth="1" />
      </Cursor>
    </Screen>
  );
}
